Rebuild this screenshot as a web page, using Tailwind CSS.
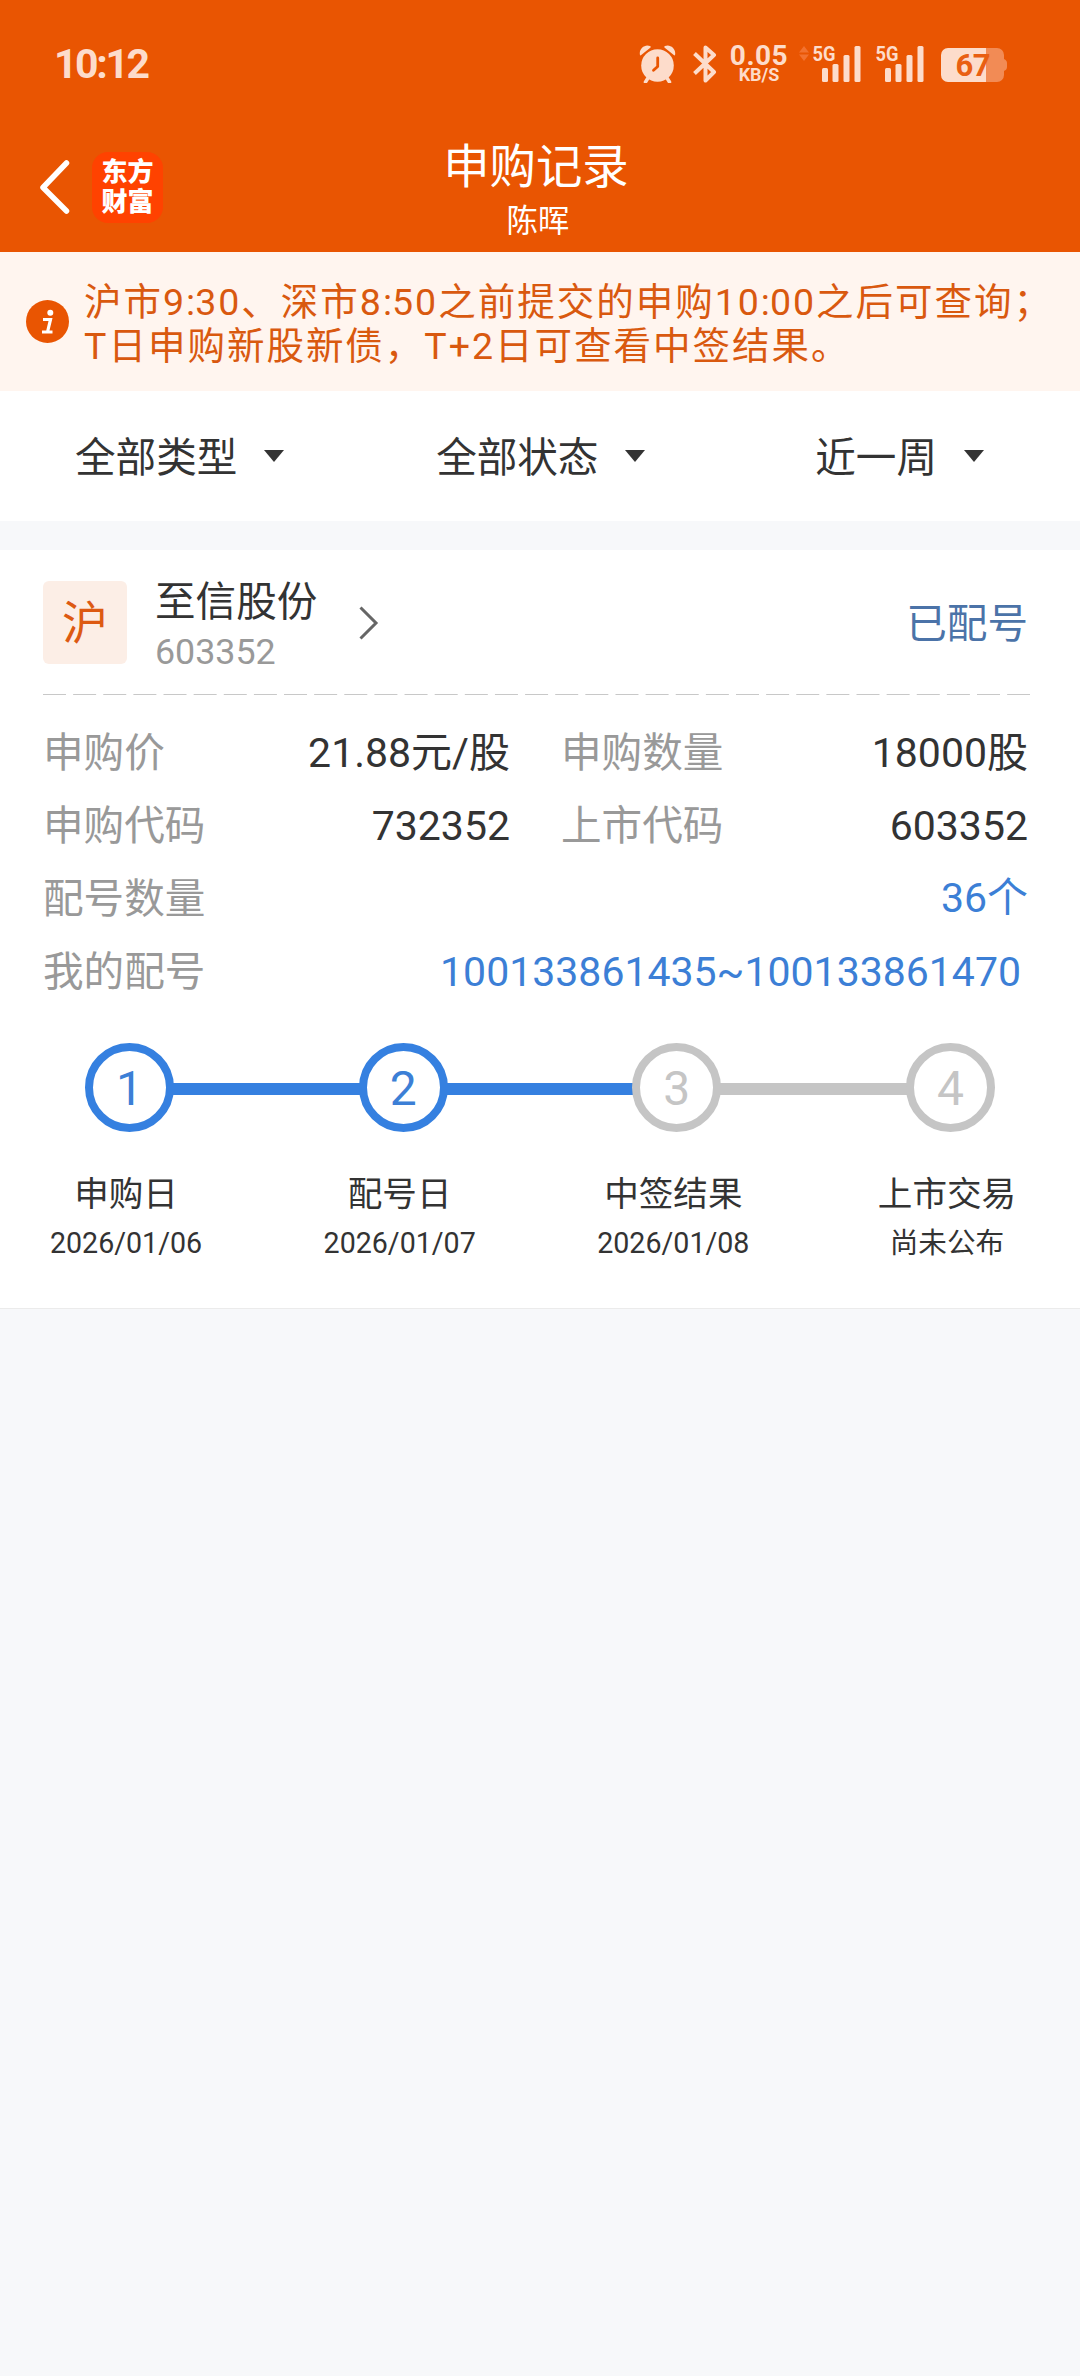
<html lang="zh-CN">
 <head>
  <meta charset="utf-8"/>
  <meta content="width=device-width, initial-scale=1.0" name="viewport"/>
  <title>
   申购记录
  </title>
  <script src="https://cdn.jsdelivr.net/npm/@tailwindcss/browser@4"></script>
 </head>
 <body class="bg-[#f7f8fa] text-[#333] font-['Roboto','Noto_Sans_CJK_SC',sans-serif]">
  <header class="bg-[#e95502] h-[252px] flex flex-col">
   <!-- status bar -->
   <div class="h-32 pl-[54px] pr-[73px] flex items-center justify-between text-[#fddccb]">
    <span class="text-[41px] font-bold tracking-[-2.4px] leading-none">10:12</span>
    <div class="flex items-center h-[38px]">
     <svg class="w-[37px] h-[38px]" viewBox="0 0 37 38" fill="none">
      <circle cx="18.5" cy="20.5" r="16.3" fill="#fddccb"/>
      <path d="M9 33 6.5 37M28 33l2.500 4" stroke="#fddccb" stroke-width="3.500" stroke-linecap="round"/>
      <path d="M1 10C-.5 4 6 -1.500 11 1c1 .5 1 1 .3 1.700L2.500 9.700C1.800 10.500 1.300 10.800 1 10zM36 10c1.500-6-5-11.500-10-9-1 .5-1 1-.3 1.700l8.800 7c.7.8 1.200 1.100 1.500.3z" fill="#fddccb"/>
      <path d="M18.700 13v8.500l-4.200 3.800" stroke="#e95502" stroke-width="2.800" stroke-linecap="round" stroke-linejoin="round"/>
     </svg>
     <svg class="w-[24px] h-[38px] ml-[17px]" viewBox="0 0 24 38" fill="none" stroke="#fddccb" stroke-width="4" stroke-linejoin="round">
      <path d="M1.500 8.500 21 27 12.500 35.500V2.500L21 10 1.500 28.500"/>
     </svg>
     <div class="w-[60px] ml-[12px] flex flex-col items-center font-bold">
      <span class="text-[28px] leading-[22px] tracking-[0.5px]">0.05</span>
      <span class="text-[18px] leading-[16px]">KB/S</span>
     </div>
     <svg class="w-[64px] h-[38px] ml-[9px] overflow-visible" viewBox="0 0 64 38">
      <path d="M1 7.500 6 1l5 6.500zM1 9.500h10L6 16z" fill="#f2722f"/>
      <text x="14.500" y="16" font-family="Roboto" font-weight="700" font-size="21" textLength="23" lengthAdjust="spacingAndGlyphs" fill="#fddccb">5G</text>
      <g fill="#fddccb">
       <rect x="24" y="23" width="6" height="14" rx="1.500"/>
       <rect x="34.500" y="19" width="6" height="18" rx="1.500"/>
       <rect x="45.500" y="10" width="6" height="27" rx="1.500"/>
       <rect x="56.500" y="1" width="6" height="36" rx="1.500"/>
      </g>
     </svg>
     <svg class="w-[50px] h-[38px] ml-[13px] overflow-visible" viewBox="0 0 50 38">
      <text x="0.500" y="16" font-family="Roboto" font-weight="700" font-size="21" textLength="23" lengthAdjust="spacingAndGlyphs" fill="#fddccb">5G</text>
      <g fill="#fddccb">
       <rect x="10" y="23" width="6" height="14" rx="1.500"/>
       <rect x="20.500" y="19" width="6" height="18" rx="1.500"/>
       <rect x="31.500" y="10" width="6" height="27" rx="1.500"/>
       <rect x="42.500" y="1" width="6" height="36" rx="1.500"/>
      </g>
     </svg>
     <svg class="w-[67px] h-[38px] ml-[15px] overflow-visible" viewBox="0 0 67 38">
      <path d="M45 3h12a7 7 0 0 1 7 7v4c2 1 3 2 3 4v4c0 2-1 3-3 4v4a7 7 0 0 1-7 7H45z" fill="#f28b55"/>
      <path d="M8 3h38v34H8a7 7 0 0 1-7-7V10a7 7 0 0 1 7-7z" fill="#fddccb"/>
      <text x="15.500" y="31" font-family="Roboto" font-weight="700" font-size="31" textLength="35" fill="#e95f12">67</text>
     </svg>
    </div>
   </div>
   <!-- title bar -->
   <div class="h-[124px] px-10 grid grid-cols-3">
    <div class="flex items-center h-[118px]">
     <svg class="w-[30px] h-[54px]" viewBox="0 0 30 54" fill="none" stroke="#fff" stroke-width="5.500" stroke-linecap="round" stroke-linejoin="round">
      <path d="M26.500 3 3 27.500 26.500 51"/>
     </svg>
     <div class="ml-[22px] w-[71px] h-[71px] rounded-2xl bg-[#ff4200] text-white text-[26px] font-black leading-[30px] flex flex-col items-center justify-center">
      <span>东方</span>
      <span>财富</span>
     </div>
    </div>
    <div class="text-center text-white whitespace-nowrap pt-3 -ml-[8px]">
     <h1 class="text-[46.4px] leading-[54px]">申购记录</h1>
     <p class="text-[31.4px] leading-[38px] pt-[9px] pl-1">陈晖</p>
    </div>
   </div>
  </header>

  <section class="bg-[#fff5ef] h-[139px] pl-[26px] flex items-center">
   <svg class="w-[43px] h-[43px]" viewBox="0 0 43 43" fill="none">
    <circle cx="21.500" cy="21.500" r="21.500" fill="#e95502"/>
    <circle cx="24.300" cy="12.800" r="3" fill="#fff"/>
    <path d="M17 19.500h7.500L21.500 32M16 32h10.500" stroke="#fff" stroke-width="3.200"/>
   </svg>
   <p class="ml-[15px] pt-[5px] text-[37.5px] leading-[44px] tracking-[2px] text-[#d9590f] whitespace-nowrap">
    沪市9<span class="tracking-normal">:</span>30、深市8<span class="tracking-normal">:</span>50之前提交的申购10<span class="tracking-normal">:</span>00之后可查询；<br/>T日申购新股新债，T+2日可查看中签结果。
   </p>
  </section>

  <nav class="bg-white h-[130px] pl-[75px] pr-[96px] flex items-center justify-between text-[40.6px] leading-[48px]">
   <button class="flex items-center">
    <span class="pt-1">全部类型</span>
    <svg class="w-5 h-3 ml-[27px]" viewBox="0 0 20 12"><path d="M0 0h20L10 12z" fill="#333"/></svg>
   </button>
   <button class="flex items-center -ml-[18px]">
    <span class="pt-1">全部状态</span>
    <svg class="w-5 h-3 ml-[27px]" viewBox="0 0 20 12"><path d="M0 0h20L10 12z" fill="#333"/></svg>
   </button>
   <button class="flex items-center">
    <span class="pt-1">近一周</span>
    <svg class="w-5 h-3 ml-[27px]" viewBox="0 0 20 12"><path d="M0 0h20L10 12z" fill="#333"/></svg>
   </button>
  </nav>

  <main class="mt-[29px] bg-white h-[759px] border-b border-[#ebebeb]">
   <div class="pl-[43px] pr-[52px] pt-[31px] flex">
    <div class="w-[84px] h-[83px] pt-[2px] rounded-md bg-[#fceee6] text-[#dd5a12] text-[46px] flex items-center justify-center">沪</div>
    <div class="ml-7 -mt-[3px]">
     <h2 class="text-[40.6px] leading-[48px]">至信股份</h2>
     <p class="text-[35.800px] leading-[42px] pt-[5px] pb-px text-[#999]">603352</p>
    </div>
    <svg class="w-[20px] h-[34px] ml-[42px] mt-[25px]" viewBox="0 0 20 34" fill="none" stroke="#666" stroke-width="3">
     <path d="M1.500 1.500 17 17 1.500 32.500"/>
    </svg>
    <span class="ml-auto text-[40.6px] leading-[87px] text-[#4b73a8]">已配号</span>
   </div>
   <svg class="w-[987px] h-px ml-[43px] mt-5" viewBox="0 0 987 1">
    <path d="M0 .5h987" stroke="#c8c8c8" stroke-width="1" stroke-dasharray="23 7.130"/>
   </svg>

   <dl class="mt-[22px] pl-[43px] pr-[52px] text-[40.6px] leading-[72.5px]">
    <div class="grid grid-cols-[467px_467px] gap-x-[51px]">
     <div class="flex justify-between">
      <dt class="text-[#999]">申购价</dt>
      <dd class="text-[41px]">21.88元/股</dd>
     </div>
     <div class="flex justify-between">
      <dt class="text-[#999]">申购数量</dt>
      <dd class="text-[41px]">18000股</dd>
     </div>
     <div class="flex justify-between">
      <dt class="text-[#999]">申购代码</dt>
      <dd class="text-[41px]">732352</dd>
     </div>
     <div class="flex justify-between">
      <dt class="text-[#999]">上市代码</dt>
      <dd class="text-[41px]">603352</dd>
     </div>
    </div>
    <div class="flex justify-between">
     <dt class="text-[#999] pt-px">配号数量</dt>
     <dd class="text-[41px] text-[#3c7fd6]">36个</dd>
    </div>
    <div class="flex justify-between">
     <dt class="text-[#999]">我的配号</dt>
     <dd class="text-[41px] text-[#3c7fd6] pr-[7px]">100133861435~100133861470</dd>
    </div>
   </dl>

   <div class="ml-[85px] w-[910px] mt-[35px] flex items-center text-[48px]">
    <span class="w-[89px] h-[89px] pt-[2px] rounded-full border-[8.5px] border-[#3580e0] text-[#3c7fd6] flex items-center justify-center">1</span>
    <span class="flex-1 h-3 -mx-px mt-[2px] bg-[#3580e0]"></span>
    <span class="w-[89px] h-[89px] pt-[2px] rounded-full border-[8.5px] border-[#3580e0] text-[#3c7fd6] flex items-center justify-center">2</span>
    <span class="flex-1 h-3 -mx-px mt-[2px] bg-[#3580e0]"></span>
    <span class="w-[89px] h-[89px] pt-[2px] rounded-full border-[8.5px] border-[#c5c5c5] text-[#c5c5c5] flex items-center justify-center">3</span>
    <span class="flex-1 h-3 -mx-px mt-[2px] bg-[#c5c5c5]"></span>
    <span class="w-[89px] h-[89px] pt-[2px] rounded-full border-[8.5px] border-[#c5c5c5] text-[#c5c5c5] flex items-center justify-center">4</span>
   </div>
   <div class="mt-10 pl-[43px] pr-[50px] flex justify-between text-center">
    <div class="w-[166px]">
     <p class="text-[34.600px] leading-[44px]">申购日</p>
     <p class="text-[28.600px] leading-[36px] mt-[9px]">2026/01/06</p>
    </div>
    <div class="w-[166px]">
     <p class="text-[34.600px] leading-[44px]">配号日</p>
     <p class="text-[28.600px] leading-[36px] mt-[9px]">2026/01/07</p>
    </div>
    <div class="w-[166px]">
     <p class="text-[34.600px] leading-[44px]">中签结果</p>
     <p class="text-[28.600px] leading-[36px] mt-[9px]">2026/01/08</p>
    </div>
    <div class="w-[166px]">
     <p class="text-[34.600px] leading-[44px]">上市交易</p>
     <p class="text-[28.600px] leading-[36px] mt-[9px]">尚未公布</p>
    </div>
   </div>
  </main>
 </body>
</html>
